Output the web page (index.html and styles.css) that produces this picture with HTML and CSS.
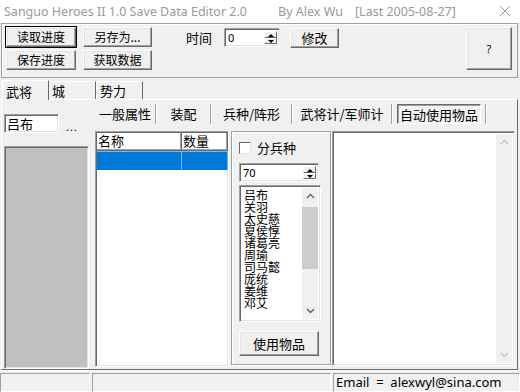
FILE: index.html
```html
<html lang="zh-CN"><head>
    <meta charset="UTF-8">
    <meta name="viewport" content="width=device-width, initial-scale=1.0">
    <title>Sanguo Heroes II 1.0 Save Data Editor 2.0</title>
    <link rel="stylesheet" href="styles.css">
</head>

<body>
    <div class="window">
        <div class="titlebar">
            <span class="t1">Sanguo Heroes II 1.0 Save Data Editor 2.0</span>
            <span class="t2">By Alex Wu</span>
            <span class="t3">[Last 2005-08-27]</span>
            <svg class="close" width="12" height="12" viewBox="0 0 12 12"><path d="M1 1 L11 11 M11 1 L1 11" stroke="#9a9a9a" stroke-width="1" fill="none"/></svg>
        </div>

        <div class="toolbar">
            <div class="file-btns">
                <button class="btn default">读取进度</button>
                <button class="btn">另存为...</button>
                <button class="btn">保存进度</button>
                <button class="btn">获取数据</button>
            </div>
            <div class="time">
                <span class="time-label">时间</span>
                <div class="spin time-spin">
                    <span class="spin-value">0</span>
                    <div class="spin-arrows">
                        <span class="arr up"></span>
                        <span class="arr down"></span>
                    </div>
                </div>
                <button class="btn modify">修改</button>
            </div>
            <button class="btn help">?</button>
        </div>

        <div class="tabs">
            <div class="tab active">武将</div>
            <div class="tab">城</div>
            <div class="tab">势力</div>
        </div>

        <div class="page">
            <div class="left-col">
                <div class="name-row">
                    <div class="field name-field">吕布</div>
                    <span class="dots">...</span>
                </div>
                <div class="portrait"></div>
            </div>

            <div class="right-col">
                <div class="subtabs">
                    <div class="subtab w1">一般属性</div>
                    <span class="sep"></span>
                    <div class="subtab w2">装配</div>
                    <span class="sep"></span>
                    <div class="subtab w3">兵种/阵形</div>
                    <span class="sep"></span>
                    <div class="subtab w4">武将计/军师计</div>
                    <span class="sep"></span>
                    <div class="subtab selected">自动使用物品</div>
                    <span class="sep"></span>
                </div>

                <div class="panels">
                    <div class="listview">
                        <div class="lv-head">
                            <div class="lv-col c1">名称</div>
                            <div class="lv-col c2">数量</div>
                        </div>
                        <div class="lv-row selected">
                            <div class="lv-cell c1"></div>
                            <div class="lv-cell c2"></div>
                        </div>
                    </div>

                    <div class="group">
                        <label class="check-row">
                            <span class="checkbox"></span>
                            <span>分兵种</span>
                        </label>
                        <div class="spin type-spin">
                            <span class="spin-value">70</span>
                            <div class="spin-arrows">
                                <span class="arr up"></span>
                                <span class="arr down"></span>
                            </div>
                        </div>
                        <div class="listbox">
                            <div class="names">
                                <div>吕布</div>
                                <div>关羽</div>
                                <div>太史慈</div>
                                <div>夏侯惇</div>
                                <div>诸葛亮</div>
                                <div>周瑜</div>
                                <div>司马懿</div>
                                <div>庞统</div>
                                <div>姜维</div>
                                <div>邓艾</div>
                            </div>
                            <div class="vscroll">
                                <svg class="chev" width="9" height="6" viewBox="0 0 9 6"><path d="M1 5 L4.5 1.5 L8 5" stroke="#606060" stroke-width="1.4" fill="none"/></svg>
                                <div class="track"><div class="thumb"></div></div>
                                <svg class="chev" width="9" height="6" viewBox="0 0 9 6"><path d="M1 1 L4.5 4.5 L8 1" stroke="#606060" stroke-width="1.4" fill="none"/></svg>
                            </div>
                        </div>
                        <button class="btn use-btn">使用物品</button>
                    </div>

                    <div class="listbox big">
                        <div class="names"></div>
                        <div class="vscroll disabled">
                            <svg class="chev" width="9" height="6" viewBox="0 0 9 6"><path d="M1 5 L4.5 1.5 L8 5" stroke="#c4c4c4" stroke-width="1.4" fill="none"/></svg>
                            <div class="track"></div>
                            <svg class="chev" width="9" height="6" viewBox="0 0 9 6"><path d="M1 1 L4.5 4.5 L8 1" stroke="#c4c4c4" stroke-width="1.4" fill="none"/></svg>
                        </div>
                    </div>
                </div>
            </div>
        </div>

        <div class="status">
            <div class="st st1"></div>
            <div class="st st2"></div>
            <div class="st st3">Email&nbsp; =&nbsp; alexwyl@sina.com</div>
        </div>
    </div>
</body></html>
```

FILE: styles.css
```css
* {
    margin: 0;
    padding: 0;
    box-sizing: border-box;
}

body {
    background: #f0f0f0;
    font-family: "Noto Sans CJK SC", "Noto Sans", sans-serif;
    font-size: 12px;
    color: #000;
    overflow: hidden;
}

.window {
    width: 520px;
    height: 392px;
    display: flex;
    flex-direction: column;
}

/* title bar */
.titlebar {
    height: 23px;
    background: #fff;
    display: flex;
    align-items: center;
    padding-left: 4px;
    font-family: "Noto Sans", sans-serif;
    font-size: 12.5px;
    color: #9a9a9a;
    white-space: nowrap;
}

.titlebar span {
    flex-shrink: 0;
}

.t1 {
    width: 274px;
}

.t2 {
    width: 77px;
}

.close {
    flex-shrink: 0;
    margin-left: auto;
    margin-right: 9px;
}

/* buttons */
.btn {
    font-family: "Noto Sans CJK SC", sans-serif;
    font-size: 12px;
    line-height: 1;
    color: #000;
    background: #f0f0f0;
    border: 1px solid;
    border-color: #fff #696969 #696969 #fff;
    box-shadow: inset -1px -1px #a0a0a0, inset 1px 1px #e3e3e3;
    height: 20px;
    display: flex;
    align-items: center;
    justify-content: center;
}

.btn.default {
    outline: 1px solid #000;
    outline-offset: 0;
}

/* toolbar */
.toolbar {
    height: 56px;
    margin: 0 2px 0 1px;
    border: 1px solid #a0a0a0;
    box-shadow: inset 1px 1px #fff;
    display: flex;
    align-items: flex-start;
    padding: 3px 5px 0 3px;
}

.file-btns {
    display: grid;
    grid-template-columns: 70px 69px;
    column-gap: 7px;
    row-gap: 3px;
    margin-left: 1px;
}

.time {
    display: flex;
    align-items: center;
    margin-left: 34px;
}

.time-label {
    font-size: 13px;
    width: 38px;
}

.spin {
    background: #fff;
    border: 1px solid;
    border-color: #a0a0a0 #fff #fff #a0a0a0;
    box-shadow: inset 1px 1px #696969, inset -1px -1px #e3e3e3;
    display: flex;
    align-items: stretch;
    padding: 2px 2px 2px 3px;
}

.time-spin {
    width: 56px;
    height: 19px;
}

.spin-value {
    flex: 1;
    font-family: "Noto Sans", sans-serif;
    font-size: 11px;
    line-height: 13px;
}

.spin-arrows {
    width: 13px;
    display: flex;
    flex-direction: column;
}

.arr {
    flex: 1;
    background: #f0f0f0;
    border: 1px solid;
    border-color: #fff #696969 #696969 #fff;
    position: relative;
}

.arr::after {
    content: "";
    position: absolute;
    left: 3px;
    width: 0;
    height: 0;
    border-left: 3px solid transparent;
    border-right: 3px solid transparent;
}

.arr.up::after {
    top: 2px;
    border-bottom: 3px solid #000;
}

.arr.down::after {
    top: 1px;
    border-top: 3px solid #000;
}

.modify {
    width: 49px;
    margin-left: 10px;
    margin-top: 1px;
    font-size: 13px;
}

.time .spin {
    margin-top: 1px;
}

.help {
    margin-left: auto;
    width: 46px;
    height: 43px;
    font-family: "Noto Sans", sans-serif;
    font-size: 11px;
}

/* tabs */
.tabs {
    display: flex;
    align-items: flex-end;
    height: 21px;
    padding-left: 2px;
}

.tab {
    width: 47px;
    height: 18px;
    padding: 1px 0 0 3px;
    font-size: 13px;
    line-height: 16px;
    border-top: 1px solid #fff;
    border-left: 1px solid #fff;
    border-right: 1px solid #696969;
}

.tab.active {
    height: 20px;
    position: relative;
    z-index: 1;
    margin-bottom: -1px;
    background: #f0f0f0;
    padding-top: 3px;
}

.tab.active + .tab {
    border-left: none;
}

/* tab page */
.page {
    height: 272px;
    margin: 0 2px 0 1px;
    border-top: 1px solid #fff;
    border-left: 1px solid #fff;
    border-right: 1px solid #696969;
    border-bottom: 1px solid #696969;
    display: flex;
    padding-left: 2px;
}

.left-col {
    width: 84px;
    padding-top: 13px;
}

.name-row {
    display: flex;
    align-items: center;
}

.field {
    background: #fff;
    border: 1px solid;
    border-color: #a0a0a0 #fff #fff #a0a0a0;
    box-shadow: inset 1px 1px #696969, inset -1px -1px #e3e3e3;
}

.name-field {
    width: 55px;
    height: 19px;
    font-size: 13px;
    line-height: 17px;
    padding-left: 2px;
}

.dots {
    margin-left: 7px;
    margin-top: 6px;
    font-family: "Noto Sans", sans-serif;
    font-size: 11px;
    letter-spacing: 1px;
}

.portrait {
    margin-top: 12px;
    width: 85px;
    height: 223px;
    background: #c0c0c0;
    border: 1px solid;
    border-color: #a0a0a0 #fff #fff #a0a0a0;
    box-shadow: inset 1px 1px #696969, inset -1px -1px #e3e3e3;
}

.right-col {
    margin-left: 7px;
    padding-top: 3px;
}

/* sub tabs */
.subtabs {
    display: flex;
    align-items: center;
    height: 21px;
}

.subtab {
    font-size: 13px;
    text-align: center;
    line-height: 19px;
}

.w1 {
    width: 60px;
}

.w2 {
    width: 53px;
}

.w3 {
    width: 79px;
}

.w4 {
    width: 98px;
}

.subtab.selected {
    margin: 0 4px;
    width: 84px;
    height: 20px;
    border: 1px solid;
    border-color: #696969 #fff #fff #696969;
    box-shadow: inset 1px 1px #a0a0a0;
    background: #f4f4f4;
}

.sep {
    width: 2px;
    height: 20px;
    border-left: 1px solid #a0a0a0;
    border-right: 1px solid #fff;
}

/* panels */
.panels {
    display: flex;
    margin-top: 7px;
    height: 236px;
}

.listview {
    width: 134px;
    background: #fff;
    border: 1px solid;
    border-color: #a0a0a0 #fff #fff #a0a0a0;
    box-shadow: inset 1px 1px #696969, inset -1px -1px #e3e3e3;
    padding: 1px 0 0 1px;
}

.lv-head,
.lv-row {
    display: flex;
}

.lv-head {
    height: 18px;
}

.lv-col {
    font-size: 13px;
    line-height: 16px;
    padding-left: 1px;
    background: #fff;
    border-right: 1px solid #696969;
    border-bottom: 1px solid #696969;
    box-shadow: inset -1px -1px #a0a0a0;
}

.c1 {
    width: 85px;
}

.c2 {
    width: 46px;
}

.lv-row {
    height: 19px;
}

.lv-row.selected .lv-cell {
    background: #0078d7;
    border-right: 1px solid #7ab8ec;
    border-top: 1px solid #7ab8ec;
}

.group {
    width: 100px;
    margin-left: 2px;
    height: 234px;
    border: 1px solid #a0a0a0;
    box-shadow: inset 1px 1px #fff, 1px 1px #fff;
    padding: 9px 0 0 7px;
}

.check-row {
    display: flex;
    align-items: center;
    gap: 6px;
    font-size: 13px;
    height: 13px;
}

.checkbox {
    width: 12px;
    height: 12px;
    background: #fff;
    border: 1px solid;
    border-color: #696969 #e3e3e3 #e3e3e3 #696969;
}

.type-spin {
    width: 80px;
    height: 19px;
    margin-top: 9px;
}

.listbox {
    display: flex;
    background: #fff;
    border: 1px solid;
    border-color: #a0a0a0 #fff #fff #a0a0a0;
    box-shadow: inset 1px 1px #696969, inset -1px -1px #e3e3e3;
    padding: 2px;
}

.group .listbox {
    width: 82px;
    height: 137px;
    margin-top: 3px;
    padding-right: 2px;
}

.names {
    flex: 1;
    font-size: 12px;
    line-height: 12px;
    padding: 1px 0 0 2px;
    overflow: hidden;
}

.vscroll {
    width: 16px;
    background: #f0f0f0;
    display: flex;
    flex-direction: column;
    align-items: center;
}

.chev {
    margin: 5px 0;
}

.track {
    flex: 1;
    width: 100%;
    padding-top: 3px;
}

.thumb {
    width: 100%;
    height: 62px;
    background: #cdcdcd;
}

.use-btn {
    width: 80px;
    height: 25px;
    margin-top: 9px;
    font-size: 13px;
}

.listbox.big {
    width: 183px;
    height: 235px;
    margin-left: 1px;
    padding: 2px;
}

/* status bar */
.status {
    flex: 1;
    display: flex;
    padding-top: 2px;
    border-top: 1px solid #fff;
}

.st {
    height: 19px;
    border: 1px solid;
    border-color: #a0a0a0 #fff #fff #a0a0a0;
}

.st1 {
    width: 90px;
}

.st2 {
    width: 239px;
    margin-left: 2px;
}

.st3 {
    flex: 1;
    margin-left: 2px;
    font-family: "Noto Sans", sans-serif;
    font-size: 13px;
    line-height: 17px;
    padding-left: 2px;
    white-space: nowrap;
    overflow: hidden;
}
```
